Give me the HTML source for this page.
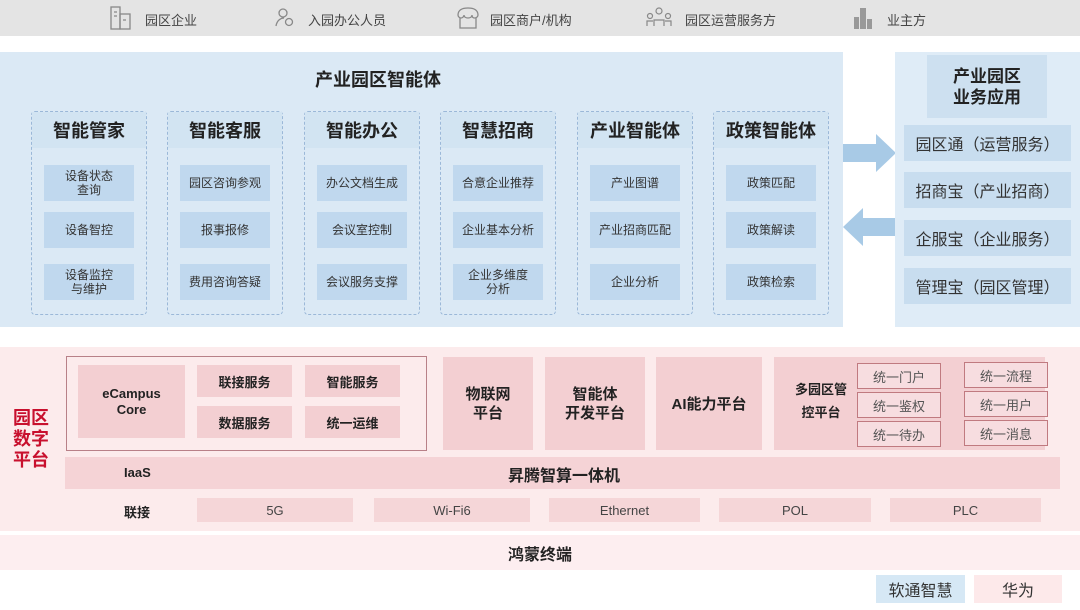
<!DOCTYPE html>
<html><head><meta charset="utf-8"><style>
*{margin:0;padding:0;box-sizing:border-box}
body{width:1080px;height:610px;overflow:hidden;background:#fff;position:relative;font-family:"Liberation Sans","Noto Sans CJK SC",sans-serif;color:#222}
.a{position:absolute}
.c{display:flex;align-items:center;justify-content:center;text-align:center}
.top{left:0;top:0;width:1080px;height:36px;background:#e4e4e4}
.tt{font-size:13px;color:#444;top:10px}
.card{border:1px dashed #9bb8d8;border-radius:4px;width:116px;height:204px;top:111px}
.ch{position:absolute;left:0;top:0;width:114px;height:36px;background:#d2e4f2;font-size:18px;font-weight:bold;color:#222}
.it{background:#c0d8ee;width:90px;height:36px;font-size:12px;color:#333;line-height:14px}
.ri{left:904px;width:167px;height:36px;background:#c8ddef;font-size:16px;color:#333}
.pk{background:#f3cfd2;font-weight:bold;color:#222}
.ob{border:1px solid #c07a80;background:#f7dde0;width:84px;height:26px;font-size:13px;color:#555}
.ln{top:498px;height:24px;background:#f5d6d8;font-size:13px;color:#444}
</style></head><body>
<div class="a top"></div>
<svg class="a" style="left:108px;top:5px" width="26" height="26" viewBox="0 0 26 26" fill="none" stroke="#888" stroke-width="1.3"><rect x="3" y="2" width="9" height="22"/><rect x="12" y="9" width="10" height="15"/><path d="M6 7h3M6 11h3M15 15h3"/></svg>
<div class="a tt" style="left:145px">园区企业</div>
<svg class="a" style="left:273px;top:6px" width="24" height="24" viewBox="0 0 24 24" fill="none" stroke="#888" stroke-width="1.3"><circle cx="10" cy="7" r="4"/><path d="M3 20c1-6 5-8 8-8"/><circle cx="16" cy="16" r="3.5"/></svg>
<div class="a tt" style="left:308px">入园办公人员</div>
<svg class="a" style="left:455px;top:6px" width="26" height="24" viewBox="0 0 26 24" fill="none" stroke="#888" stroke-width="1.3"><path d="M3 9c0-5 4-7 10-7s10 2 10 7c0 2-2 3-3.5 3S17 11 17 9c0 2-2 3-4 3S9 11 9 9c0 2-2 3-3 3S3 11 3 9z"/><path d="M5 12v10h16V12"/></svg>
<div class="a tt" style="left:490px">园区商户/机构</div>
<svg class="a" style="left:645px;top:6px" width="28" height="24" viewBox="0 0 28 24" fill="none" stroke="#888" stroke-width="1.2"><circle cx="14" cy="5" r="3"/><circle cx="5" cy="10" r="2.5"/><circle cx="23" cy="10" r="2.5"/><path d="M9 20v-6h10v6M2 20v-5h6M20 15h6v5"/></svg>
<div class="a tt" style="left:685px">园区运营服务方</div>
<svg class="a" style="left:850px;top:5px" width="26" height="26" viewBox="0 0 26 26" fill="#999"><rect x="10" y="3" width="6" height="21"/><rect x="4" y="12" width="5" height="12"/><rect x="17" y="14" width="5" height="10"/></svg>
<div class="a tt" style="left:887px">业主方</div>

<div class="a" style="left:0;top:52px;width:843px;height:275px;background:#dbe9f5"></div>
<div class="a" style="left:0;top:66px;width:756px;text-align:center;font-size:18px;font-weight:bold">产业园区智能体</div>

<div class="a card" style="left:31px"><div class="ch c">智能管家</div></div>
<div class="a card" style="left:167px"><div class="ch c">智能客服</div></div>
<div class="a card" style="left:304px"><div class="ch c">智能办公</div></div>
<div class="a card" style="left:440px"><div class="ch c">智慧招商</div></div>
<div class="a card" style="left:577px"><div class="ch c">产业智能体</div></div>
<div class="a card" style="left:713px"><div class="ch c">政策智能体</div></div>

<div class="a it c" style="left:44px;top:165px">设备状态<br>查询</div>
<div class="a it c" style="left:44px;top:212px">设备智控</div>
<div class="a it c" style="left:44px;top:264px">设备监控<br>与维护</div>
<div class="a it c" style="left:180px;top:165px">园区咨询参观</div>
<div class="a it c" style="left:180px;top:212px">报事报修</div>
<div class="a it c" style="left:180px;top:264px">费用咨询答疑</div>
<div class="a it c" style="left:317px;top:165px">办公文档生成</div>
<div class="a it c" style="left:317px;top:212px">会议室控制</div>
<div class="a it c" style="left:317px;top:264px">会议服务支撑</div>
<div class="a it c" style="left:453px;top:165px">合意企业推荐</div>
<div class="a it c" style="left:453px;top:212px">企业基本分析</div>
<div class="a it c" style="left:453px;top:264px">企业多维度<br>分析</div>
<div class="a it c" style="left:590px;top:165px">产业图谱</div>
<div class="a it c" style="left:590px;top:212px">产业招商匹配</div>
<div class="a it c" style="left:590px;top:264px">企业分析</div>
<div class="a it c" style="left:726px;top:165px">政策匹配</div>
<div class="a it c" style="left:726px;top:212px">政策解读</div>
<div class="a it c" style="left:726px;top:264px">政策检索</div>

<svg class="a" style="left:843px;top:134px" width="53" height="38" viewBox="0 0 53 38" fill="#a8cae6"><path d="M0 10h33V0l20 19-20 19V28H0z"/></svg>
<svg class="a" style="left:843px;top:208px" width="53" height="38" viewBox="0 0 53 38" fill="#a8cae6"><path d="M53 10H20V0L0 19l20 19V28h33z"/></svg>

<div class="a" style="left:895px;top:52px;width:185px;height:275px;background:#dfecf7"></div>
<div class="a c" style="left:927px;top:55px;width:120px;height:63px;background:#cde0f0;font-size:17px;font-weight:bold;line-height:21px">产业园区<br>业务应用</div>
<div class="a ri c" style="top:125px">园区通（运营服务）</div>
<div class="a ri c" style="top:172px">招商宝（产业招商）</div>
<div class="a ri c" style="top:220px">企服宝（企业服务）</div>
<div class="a ri c" style="top:268px">管理宝（园区管理）</div>

<div class="a" style="left:0;top:347px;width:1080px;height:184px;background:#fcebec"></div>
<div class="a" style="left:13px;top:408px;font-size:18px;font-weight:bold;color:#c8102e;line-height:21px">园区<br>数字<br>平台</div>
<div class="a" style="left:66px;top:356px;width:361px;height:95px;border:1px solid #b88088"></div>
<div class="a pk c" style="left:78px;top:365px;width:107px;height:73px;font-size:13px;line-height:16px">eCampus<br>Core</div>
<div class="a pk c" style="left:197px;top:365px;width:95px;height:32px;font-size:13px">联接服务</div>
<div class="a pk c" style="left:305px;top:365px;width:95px;height:32px;font-size:13px">智能服务</div>
<div class="a pk c" style="left:197px;top:406px;width:95px;height:32px;font-size:13px">数据服务</div>
<div class="a pk c" style="left:305px;top:406px;width:95px;height:32px;font-size:13px">统一运维</div>
<div class="a pk c" style="left:443px;top:357px;width:90px;height:93px;font-size:15px;line-height:19px">物联网<br>平台</div>
<div class="a pk c" style="left:545px;top:357px;width:100px;height:93px;font-size:15px;line-height:19px">智能体<br>开发平台</div>
<div class="a pk c" style="left:656px;top:357px;width:106px;height:93px;font-size:15px">AI能力平台</div>
<div class="a pk" style="left:774px;top:357px;width:271px;height:93px"></div>
<div class="a c" style="left:786px;top:378px;width:70px;font-size:13px;font-weight:bold;line-height:23px">多园区管<br>控平台</div>
<div class="a ob c" style="left:857px;top:363px">统一门户</div>
<div class="a ob c" style="left:857px;top:392px">统一鉴权</div>
<div class="a ob c" style="left:857px;top:421px">统一待办</div>
<div class="a ob c" style="left:964px;top:362px">统一流程</div>
<div class="a ob c" style="left:964px;top:391px">统一用户</div>
<div class="a ob c" style="left:964px;top:420px">统一消息</div>

<div class="a" style="left:65px;top:457px;width:995px;height:32px;background:#f5d3d6"></div>
<div class="a" style="left:124px;top:465px;font-size:13px;font-weight:bold">IaaS</div>
<div class="a" style="left:0;top:462px;width:1080px;text-align:center;font-size:16px;font-weight:bold;padding-left:48px">昇腾智算一体机</div>
<div class="a" style="left:124px;top:502px;font-size:13px;font-weight:bold">联接</div>
<div class="a ln c" style="left:197px;width:156px">5G</div>
<div class="a ln c" style="left:374px;width:156px">Wi-Fi6</div>
<div class="a ln c" style="left:549px;width:151px">Ethernet</div>
<div class="a ln c" style="left:719px;width:152px">POL</div>
<div class="a ln c" style="left:890px;width:151px">PLC</div>

<div class="a c" style="left:0;top:535px;width:1080px;height:35px;background:#fdeef0;font-size:16px;font-weight:bold">鸿蒙终端</div>
<div class="a c" style="left:876px;top:575px;width:89px;height:28px;background:#d6e8f5;font-size:16px;color:#333">软通智慧</div>
<div class="a c" style="left:974px;top:575px;width:88px;height:28px;background:#fde9ea;font-size:16px;color:#333">华为</div>
</body></html>
